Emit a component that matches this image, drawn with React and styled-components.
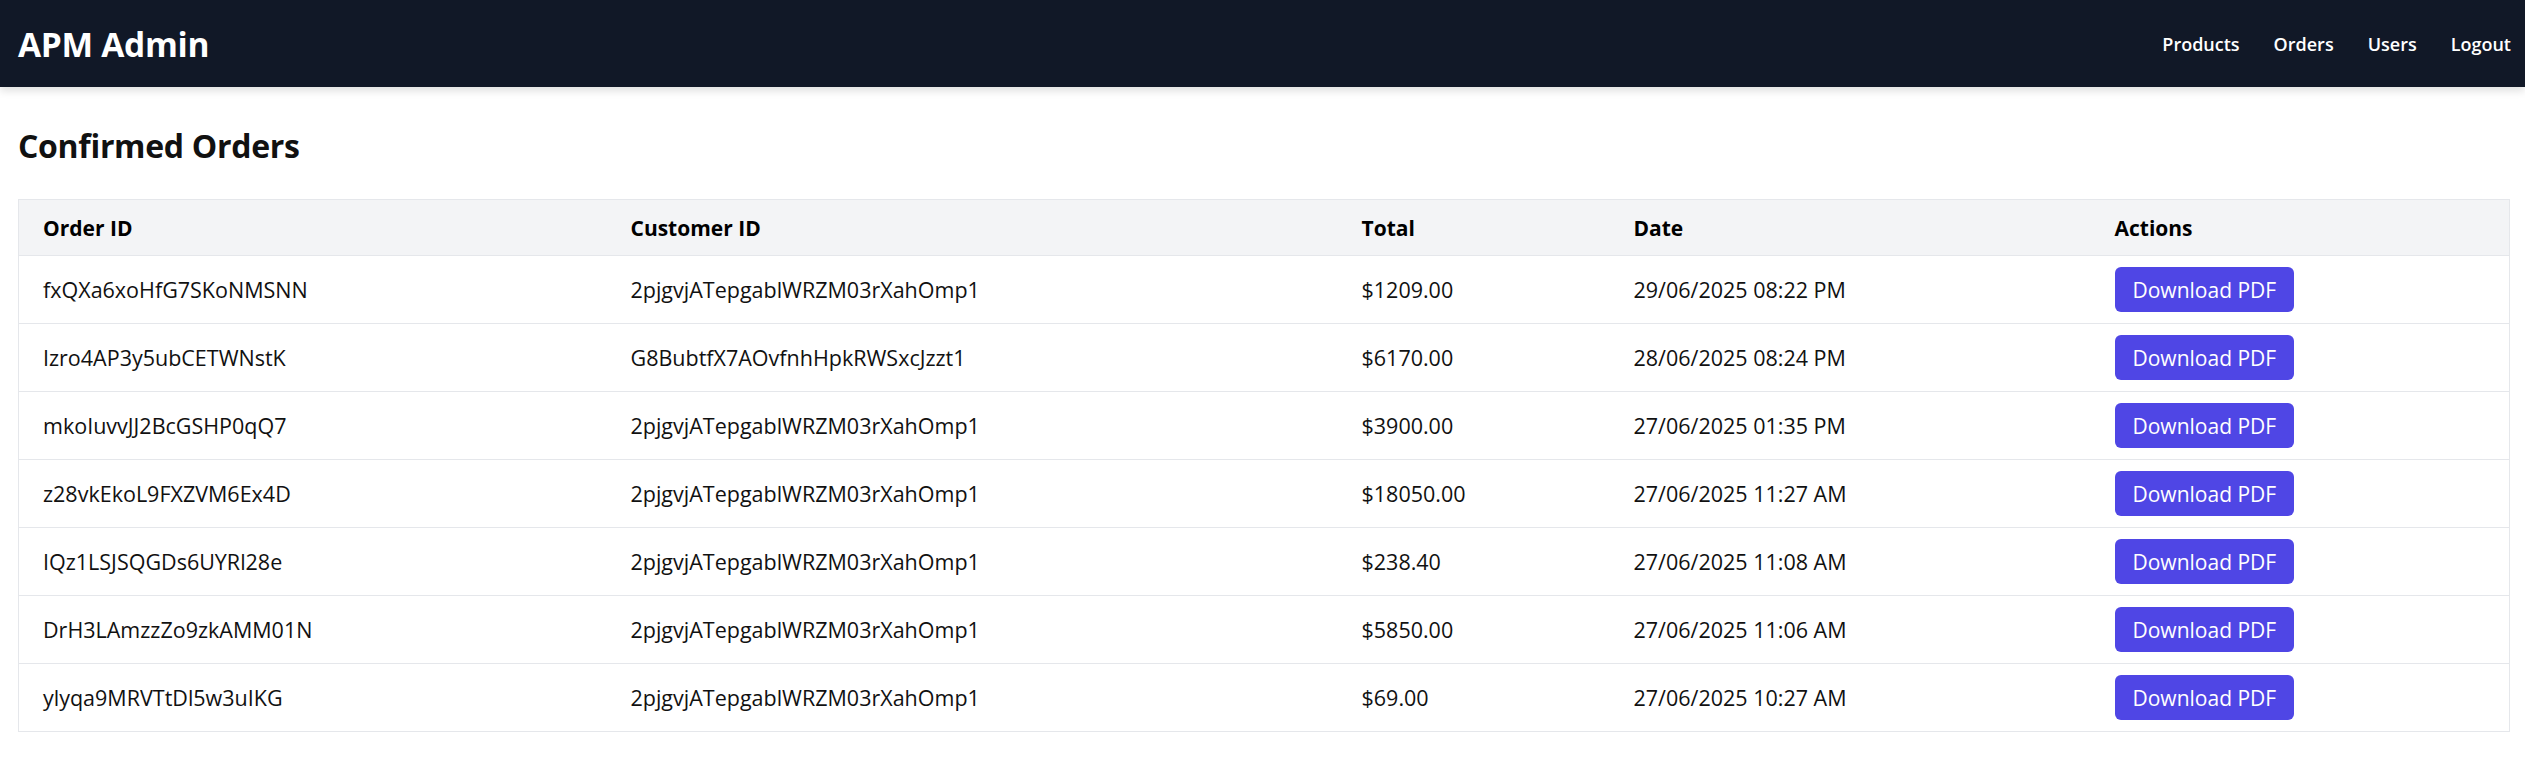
import React from "react";
import styled, { createGlobalStyle } from "styled-components";

const GlobalStyle = createGlobalStyle`
  html, body {
    margin: 0;
    padding: 0;
    background: #ffffff;
  }
  body {
    font-family: "Open Sans", "Noto Sans", "Liberation Sans", sans-serif;
    color: #111111;
  }
  * {
    box-sizing: border-box;
  }
`;

const NavBar = styled.nav`
  height: 87px;
  background: #111827;
  color: #ffffff;
  display: flex;
  align-items: center;
  justify-content: space-between;
  padding: 0 14px 0 18px;
  box-shadow: 0 4px 8px rgba(0, 0, 0, 0.12);
  position: relative;
`;

const Brand = styled.div`
  font-size: 33.5px;
  font-weight: 700;
  letter-spacing: -0.3px;
`;

const NavLinks = styled.div`
  display: flex;
  align-items: center;
  gap: 34px;
`;

const NavLink = styled.a`
  color: #ffffff;
  text-decoration: none;
  font-size: 18px;
  font-weight: 600;
  cursor: pointer;
`;

const Main = styled.main`
  padding: 35px 15px 0 18px;
`;

const Title = styled.h1`
  margin: 0 0 29px;
  font-size: 32px;
  line-height: 48px;
  font-weight: 700;
  letter-spacing: -0.3px;
`;

const Table = styled.table`
  width: 100%;
  border-collapse: collapse;
  table-layout: fixed;
  border: 1px solid #e5e7eb;
`;

const HeadRow = styled.tr`
  background: #f3f4f6;
  height: 56px;
`;

const HeadCell = styled.th`
  text-align: left;
  padding: 0 24px;
  font-size: 21px;
  font-weight: 700;
  color: #000000;
  border-bottom: 1px solid #e5e7eb;
`;

const Row = styled.tr`
  height: 68px;
  border-bottom: 1px solid #e5e7eb;
`;

const Cell = styled.td`
  padding: 0 24px;
  font-size: 21.5px;
  color: #111111;
  white-space: nowrap;
`;

const PdfButton = styled.button`
  height: 45px;
  padding: 0 18px;
  border: 0;
  border-radius: 6px;
  background: #4f46e5;
  color: #ffffff;
  font-family: inherit;
  font-size: 21px;
  cursor: pointer;
`;

const orders = [
  { id: "fxQXa6xoHfG7SKoNMSNN", customer: "2pjgvjATepgablWRZM03rXahOmp1", total: "$1209.00", date: "29/06/2025 08:22 PM" },
  { id: "Izro4AP3y5ubCETWNstK", customer: "G8BubtfX7AOvfnhHpkRWSxcJzzt1", total: "$6170.00", date: "28/06/2025 08:24 PM" },
  { id: "mkoIuvvJJ2BcGSHP0qQ7", customer: "2pjgvjATepgablWRZM03rXahOmp1", total: "$3900.00", date: "27/06/2025 01:35 PM" },
  { id: "z28vkEkoL9FXZVM6Ex4D", customer: "2pjgvjATepgablWRZM03rXahOmp1", total: "$18050.00", date: "27/06/2025 11:27 AM" },
  { id: "IQz1LSJSQGDs6UYRl28e", customer: "2pjgvjATepgablWRZM03rXahOmp1", total: "$238.40", date: "27/06/2025 11:08 AM" },
  { id: "DrH3LAmzzZo9zkAMM01N", customer: "2pjgvjATepgablWRZM03rXahOmp1", total: "$5850.00", date: "27/06/2025 11:06 AM" },
  { id: "ylyqa9MRVTtDl5w3uIKG", customer: "2pjgvjATepgablWRZM03rXahOmp1", total: "$69.00", date: "27/06/2025 10:27 AM" },
];

export default function App() {
  return (
    <>
      <GlobalStyle />
      <NavBar>
        <Brand>APM Admin</Brand>
        <NavLinks>
          <NavLink>Products</NavLink>
          <NavLink>Orders</NavLink>
          <NavLink>Users</NavLink>
          <NavLink>Logout</NavLink>
        </NavLinks>
      </NavBar>
      <Main>
        <Title>Confirmed Orders</Title>
        <Table>
          <colgroup>
            <col style={{ width: 588 }} />
            <col style={{ width: 731 }} />
            <col style={{ width: 272 }} />
            <col style={{ width: 481 }} />
            <col />
          </colgroup>
          <thead>
            <HeadRow>
              <HeadCell>Order ID</HeadCell>
              <HeadCell>Customer ID</HeadCell>
              <HeadCell>Total</HeadCell>
              <HeadCell>Date</HeadCell>
              <HeadCell>Actions</HeadCell>
            </HeadRow>
          </thead>
          <tbody>
            {orders.map((o) => (
              <Row key={o.id}>
                <Cell>{o.id}</Cell>
                <Cell>{o.customer}</Cell>
                <Cell>{o.total}</Cell>
                <Cell>{o.date}</Cell>
                <Cell>
                  <PdfButton type="button">Download PDF</PdfButton>
                </Cell>
              </Row>
            ))}
          </tbody>
        </Table>
      </Main>
    </>
  );
}
